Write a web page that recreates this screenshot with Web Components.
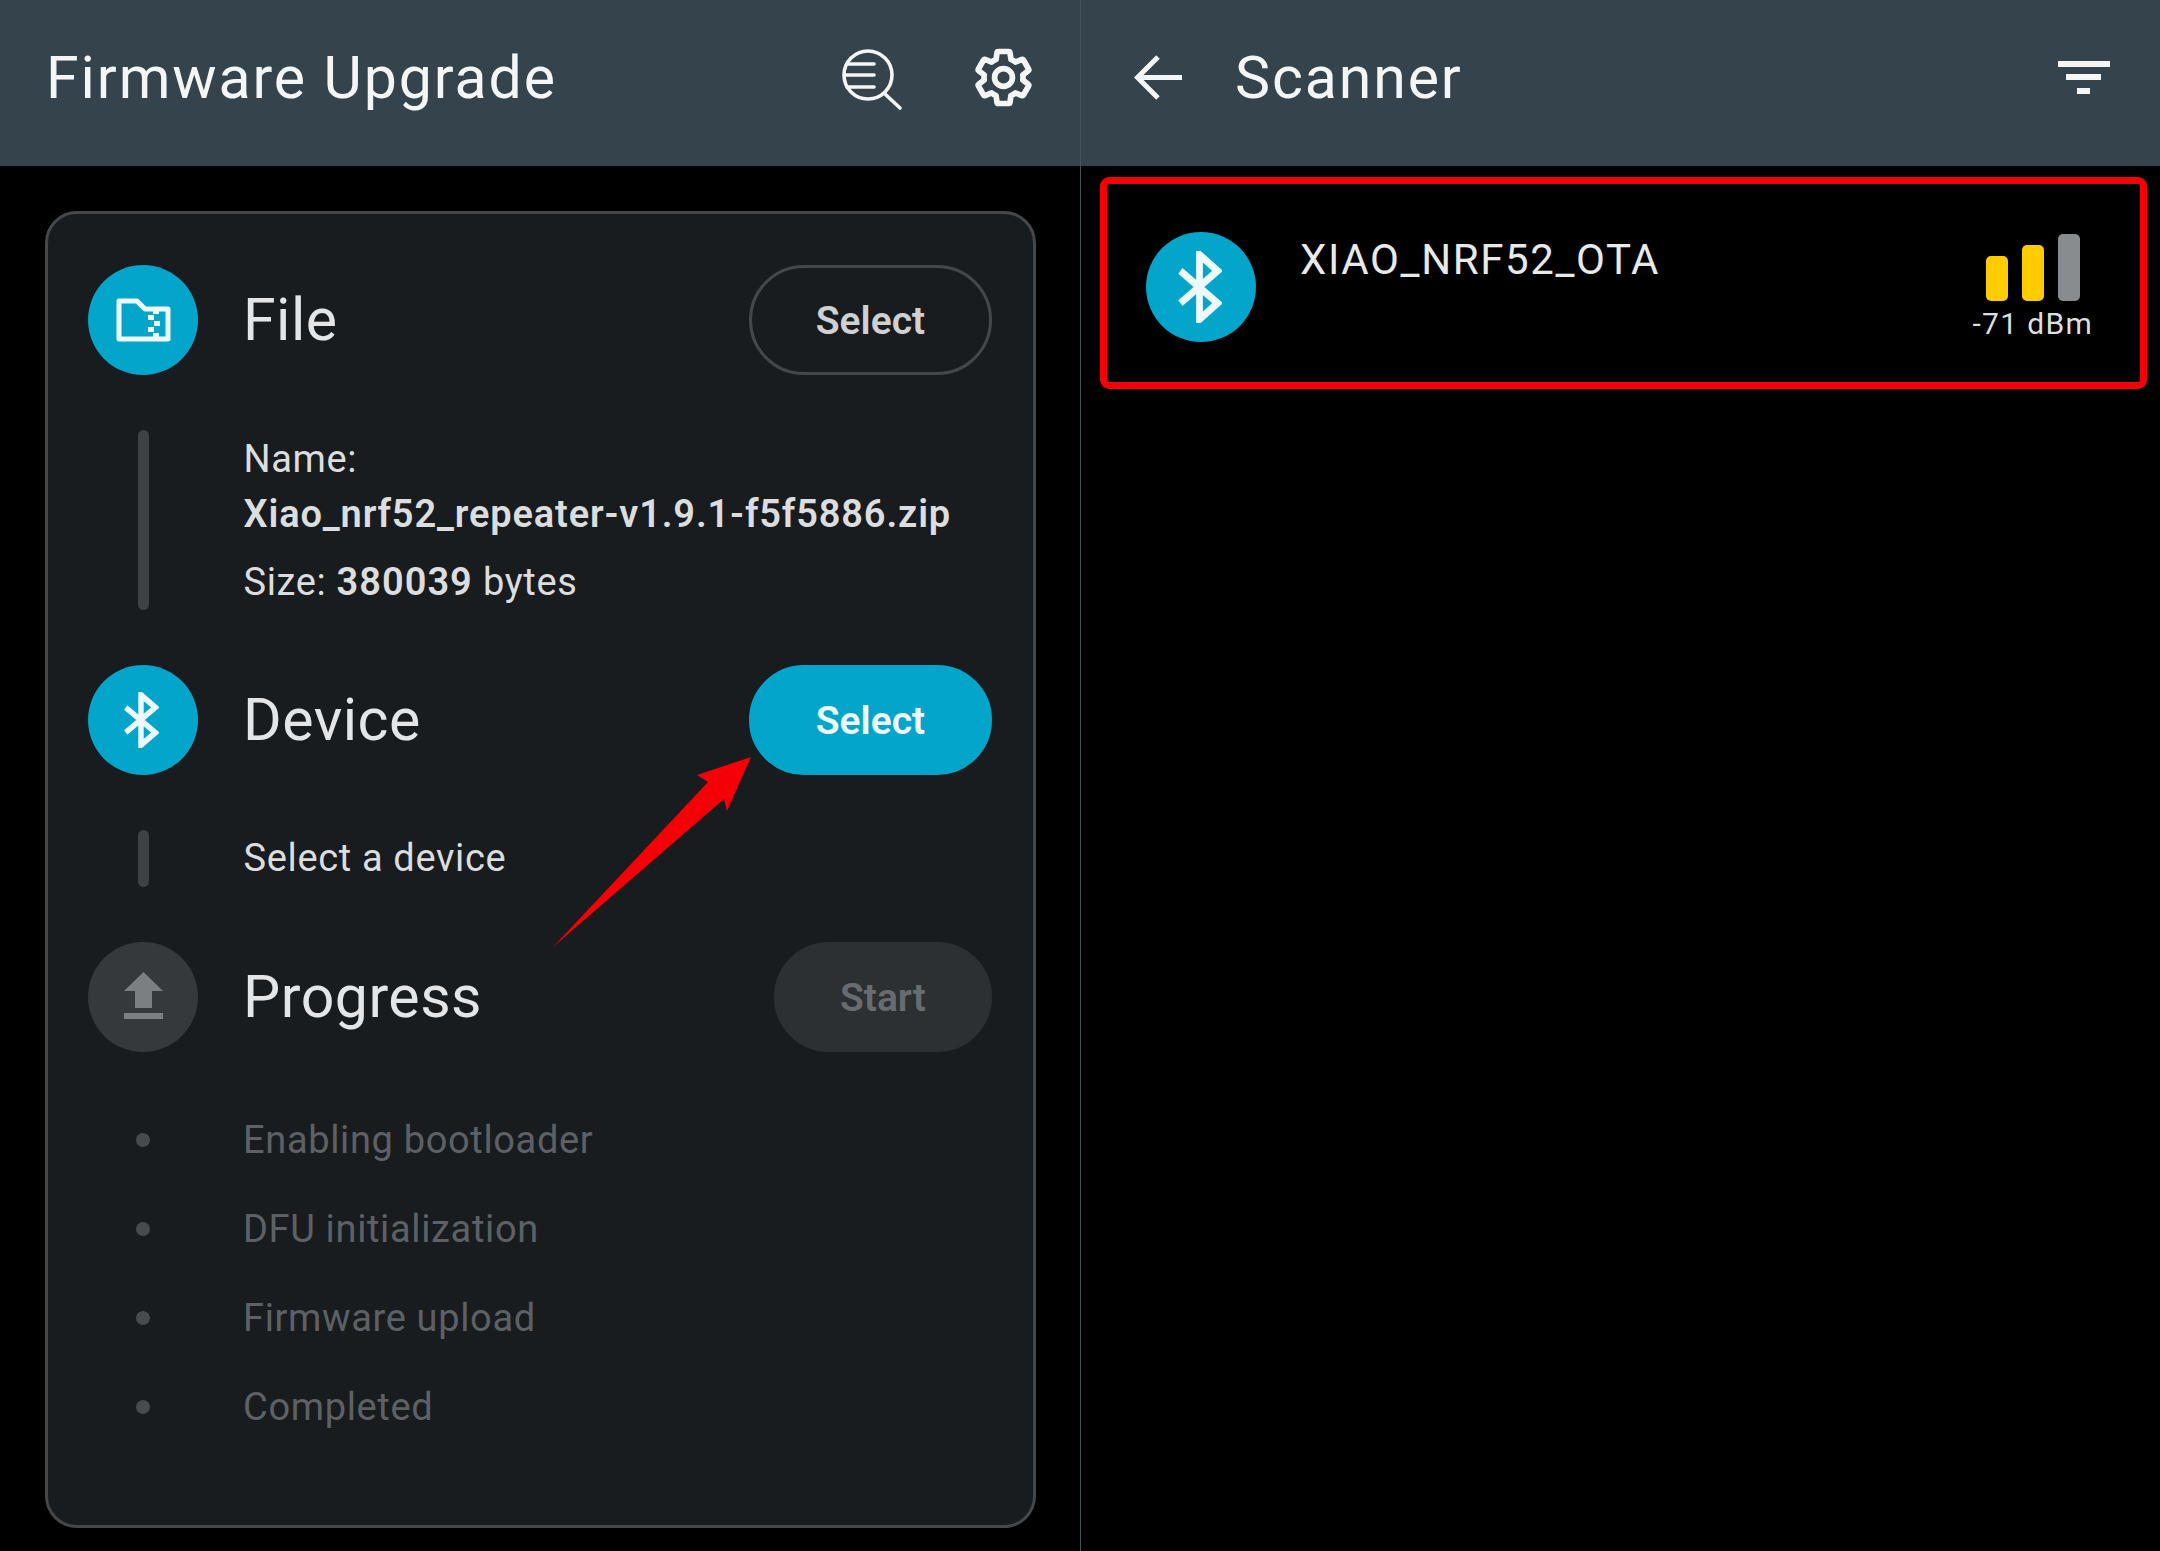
<!DOCTYPE html>
<html><head><meta charset="utf-8"><style>
html,body{margin:0;background:#000;}
body{width:2160px;height:1551px;overflow:hidden;position:relative;font-family:Roboto,"Liberation Sans",sans-serif;color:#e4e5e6;}
#arrow{position:absolute;left:0;top:0;width:2160px;height:1551px;pointer-events:none;}
</style></head><body>
<template id="bar-t"><style>
:host{display:flex;align-items:center;height:166px;padding-bottom:11px;background:#35434c;box-sizing:border-box;color:#f4f6f6;}
.t{font-size:59px;letter-spacing:1.9px;line-height:1;white-space:nowrap;}
</style><slot name="lead"></slot><span class="t"><slot></slot></span><span style="flex:1"></span><slot name="actions"></slot></template>

<template id="circle-t"><style>
:host{display:flex;flex:none;width:110px;height:110px;border-radius:50%;background:#04a5ca;align-items:center;justify-content:center;}
:host([off]){background:#35393c;}
::slotted(svg){display:block;}
</style><slot></slot></template>

<template id="btn-t"><style>
:host{display:flex;box-sizing:border-box;height:110px;padding-top:2px;border-radius:55px;align-items:center;justify-content:center;font-size:39px;font-weight:600;letter-spacing:0;border:3px solid #44484b;color:#cfd0d2;}
:host([variant=primary]){background:#04a5ca;border-color:#04a5ca;color:#eef9fb;}
:host([variant=off]){background:#2c3033;border-color:#2c3033;color:#686c6f;}
</style><slot></slot></template>

<template id="step-t"><style>
:host{display:flex;align-items:center;height:110px;}
.t{flex:1;margin:-2px 0 0 45px;font-size:59px;letter-spacing:.5px;color:#e4e5e6;line-height:1;}
</style><slot name="icon"></slot><span class="t"><slot></slot></span><slot name="action"></slot></template>

<template id="detail-t"><style>
:host{display:flex;margin:55px 0;font-size:38px;letter-spacing:.65px;color:#dcdddf;}
.rail{flex:none;width:11px;margin:0 49.5px 0 50px;background:#3c4145;border-radius:6px;}
.c{margin-left:45px;}
</style><div class="rail"></div><div class="c"><slot></slot></div></template>

<template id="task-t"><style>
:host{display:flex;align-items:center;height:89px;font-size:38px;letter-spacing:.65px;color:#5d6165;}
i{flex:none;width:14px;height:14px;border-radius:50%;background:#474b4f;margin:0 48px;}
span{margin-left:45px;}
</style><i></i><span><slot></slot></span></template>

<template id="device-t"><style>
:host{display:flex;box-sizing:border-box;margin:11px 13px 0 19px;height:212px;border:7px solid #f50006;border-radius:9px;padding:8px 47px 0 39px;align-items:center;}
.n{flex:1;align-self:flex-start;margin:43px 0 0 44px;font-size:42px;letter-spacing:1.6px;color:#e8e9e9;line-height:50px;}
</style><slot name="icon"></slot><div class="n"><slot></slot></div><slot name="signal"></slot></template>

<template id="signal-t"><style>
:host{display:flex;flex-direction:column;align-items:center;}
.b{display:flex;align-items:flex-end;gap:14px;height:67px;}
.b i{display:block;width:22px;border-radius:5px;background:#ffcc00;}
.t{margin-top:6px;font-size:30px;line-height:34px;letter-spacing:1.3px;color:#dddedf;}
</style><div class="b"><i style="height:45px"></i><i style="height:56px"></i><i style="height:67px;background:#888c8f"></i></div><div class="t"><slot></slot></div></template>

<fw-page-root>
<section style="flex:none;width:1081px;box-sizing:border-box;border-right:1px solid #4a5358;">
  <app-bar style="padding-left:46px;padding-right:44px;">Firmware Upgrade
    <svg slot="actions" width="62" height="66" viewBox="0 0 62 66" style="margin-right:67px;margin-top:8px" fill="none" stroke="#f4f6f6" stroke-width="3.6" stroke-linecap="round"><circle cx="26" cy="26" r="24"/><path d="M5 15H32M3 26H32M5 38H32M43 45L58 59"/></svg>
    <svg slot="actions" width="65" height="65" viewBox="0 0 24 24" fill="none" stroke="#f4f6f6" stroke-width="2.1" stroke-linejoin="round"><path d="M19.14 12.94c.04-.3.06-.61.06-.94 0-.32-.02-.64-.07-.94l2.03-1.58c.18-.14.23-.41.12-.61l-1.92-3.32c-.12-.22-.37-.29-.59-.22l-2.39.96c-.5-.38-1.03-.7-1.62-.94l-.36-2.54c-.04-.24-.24-.41-.48-.41h-3.84c-.24 0-.43.17-.47.41l-.36 2.54c-.59.24-1.13.57-1.62.94l-2.39-.96c-.22-.08-.47 0-.59.22L2.74 8.87c-.12.21-.08.47.12.61l2.03 1.58c-.05.3-.09.63-.09.94s.02.64.07.94l-2.03 1.58c-.18.14-.23.41-.12.61l1.92 3.32c.12.22.37.29.59.22l2.39-.96c.5.38 1.03.7 1.62.94l.36 2.54c.05.24.24.41.48.41h3.84c.24 0 .44-.17.47-.41l.36-2.54c.59-.24 1.13-.56 1.62-.94l2.39.96c.22.08.47 0 .59-.22l1.92-3.32c.12-.22.07-.47-.12-.61l-2.01-1.58z"/><circle cx="12" cy="12" r="3.3"/></svg>
  </app-bar>
  <div style="margin:45px 44px 0 45px;box-sizing:border-box;height:1317px;border:3px solid #44484b;border-radius:32px;background:#181c1f;padding:51px 41px 0 40px;">
    <fw-step>
      <icon-circle slot="icon"><svg width="55" height="44" viewBox="0 0 55 44" fill="none" stroke="#eef9fb" stroke-width="5" stroke-linejoin="round"><path d="M3 3H21L29 11H52V41H3Z"/><g fill="#eef9fb" stroke="none"><rect x="37" y="11" width="6" height="5"/><rect x="32" y="17" width="6" height="5"/><rect x="38" y="23" width="6" height="5"/><rect x="32" y="29" width="6" height="5"/><rect x="37" y="35" width="6" height="5"/></g></svg></icon-circle>
      File
      <pill-button slot="action" style="width:243px">Select</pill-button>
    </fw-step>
    <step-detail>
      <div style="line-height:1;padding:10px 0 9px;">
        <div style="height:30px;line-height:38px;">Name:</div>
        <div style="margin-top:25px;font-weight:600;letter-spacing:.85px;white-space:nowrap;line-height:38px;">Xiao_nrf52_repeater-v1.9.1-f5f5886.zip</div>
        <div style="margin-top:30px;line-height:38px;">Size: <b style="font-weight:600;letter-spacing:1px">380039</b> bytes</div>
      </div>
    </step-detail>
    <fw-step>
      <icon-circle slot="icon"><svg width="36" height="56" viewBox="0 0 40 58" preserveAspectRatio="none" style="margin-right:4px" fill="none" stroke="#eef9fb" stroke-width="6"><path d="M3 16L36 42L20 55V3L36 16L3 42"/></svg></icon-circle>
      Device
      <pill-button slot="action" variant="primary" style="width:243px">Select</pill-button>
    </fw-step>
    <step-detail><div style="height:57px;line-height:57px;">Select a device</div></step-detail>
    <fw-step>
      <icon-circle slot="icon" off><svg width="39" height="47" viewBox="0 0 39 47" style="margin-top:-3px" fill="#7b7f82"><path d="M19.5 0L39 19H28V36H11V19H0Z"/><rect y="41" width="39" height="6"/></svg></icon-circle>
      Progress
      <pill-button slot="action" variant="off" style="width:218px">Start</pill-button>
    </fw-step>
    <div style="margin-top:43px">
      <task-item>Enabling bootloader</task-item>
      <task-item>DFU initialization</task-item>
      <task-item>Firmware upload</task-item>
      <task-item>Completed</task-item>
    </div>
  </div>
</section>
<section style="flex:1;min-width:0;">
  <app-bar style="padding-right:50px;">
    <svg slot="lead" width="49" height="45" viewBox="0 0 49 45" style="margin:0 52px 0 53px" fill="none" stroke="#f4f6f6" stroke-width="5"><path d="M48 22.5H4M24 2L3.5 22.5L24 43"/></svg>
    Scanner
    <svg slot="actions" width="52" height="33" viewBox="0 0 52 33" fill="#f4f6f6"><rect width="52" height="6"/><rect x="8" y="13" width="35" height="6"/><rect x="19" y="27" width="13" height="6"/></svg>
  </app-bar>
  <device-row>
    <icon-circle slot="icon"><svg width="45" height="72" viewBox="0 0 40 58" preserveAspectRatio="none" style="margin-right:3px" fill="none" stroke="#eef9fb" stroke-width="6"><path d="M3 16L36 42L20 55V3L36 16L3 42"/></svg></icon-circle>
    XIAO_NRF52_OTA
    <signal-meter slot="signal">-71 dBm</signal-meter>
  </device-row>
</section>
</fw-page-root>
<svg id="arrow" viewBox="0 0 2160 1551"><path fill="#f50006" d="M751 757L727 811L724 799L553 947L708 782L697 775Z"/></svg>
<script>
const simple=(name,id)=>customElements.define(name,class extends HTMLElement{constructor(){super();this.attachShadow({mode:'open'}).appendChild(document.getElementById(id).content.cloneNode(true));}});
customElements.define('fw-page-root',class extends HTMLElement{constructor(){super();this.attachShadow({mode:'open'}).innerHTML='<style>:host{display:flex;height:1551px}</style><slot></slot>';}});
simple('app-bar','bar-t');simple('icon-circle','circle-t');simple('pill-button','btn-t');simple('fw-step','step-t');simple('step-detail','detail-t');simple('task-item','task-t');simple('device-row','device-t');simple('signal-meter','signal-t');
</script>
</body></html>
